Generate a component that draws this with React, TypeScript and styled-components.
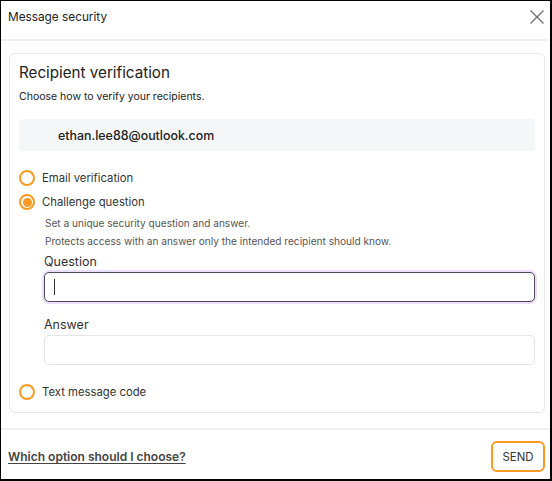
import styled, { createGlobalStyle } from "styled-components";
import { useState } from "react";

const Global = createGlobalStyle`
  html, body {
    margin: 0;
    padding: 0;
    background: #fff;
  }
  body {
    font-family: Inter, "Noto Sans", sans-serif;
    color: #222;
  }
  * {
    box-sizing: border-box;
  }
`;

const ORANGE = "#fa9a22";

const Dialog = styled.div`
  width: 552px;
  height: 481px;
  border: 1px solid #000;
  border-right-width: 2px;
  border-bottom-width: 2px;
  display: flex;
  flex-direction: column;
  background: #fff;
`;

const Header = styled.div`
  height: 40px;
  flex-shrink: 0;
  display: flex;
  align-items: center;
  justify-content: space-between;
  padding: 0 4px 6px 7px;
  border-bottom: 2px solid #eeeff1;
`;

const Title = styled.div`
  font-size: 11.8px;
  line-height: 16px;
  color: #222;
`;

const CloseButton = styled.button`
  width: 18px;
  height: 18px;
  border: none;
  background: none;
  padding: 0;
  display: flex;
  align-items: center;
  justify-content: center;
  cursor: pointer;
`;

const Body = styled.div`
  flex: 1;
  padding: 12px 5px 0 8px;
`;

const Card = styled.div`
  border: 1px solid #e6e7e9;
  border-radius: 6px;
  padding: 8px 9px 8px 9px;
`;

const Heading = styled.h2`
  margin: 0;
  font-size: 15.2px;
  font-weight: 400;
  color: #222;
  line-height: 22px;
`;

const Subtitle = styled.p`
  margin: 5px 0 0;
  font-size: 10.5px;
  line-height: 16px;
  color: #222;
`;

const RecipientBox = styled.div`
  margin-top: 14px;
  height: 32px;
  border-radius: 4px;
  background: #f5f6f7;
  display: flex;
  align-items: center;
  padding: 1px 0 0 39px;
  font-size: 12.4px;
  font-weight: 500;
  color: #222;
`;

const Options = styled.div`
  margin-top: 15px;
  display: flex;
  flex-direction: column;
`;

const OptionRow = styled.label<{ $spaced?: boolean }>`
  display: flex;
  align-items: center;
  gap: 7px;
  height: 24px;
  margin-top: ${(p) => (p.$spaced ? 15 : 0)}px;
  font-size: 11.3px;
  color: #333;
  cursor: pointer;
`;

const Radio = styled.span<{ $checked: boolean }>`
  width: 16px;
  height: 16px;
  flex-shrink: 0;
  border-radius: 50%;
  border: 2px solid ${ORANGE};
  display: flex;
  align-items: center;
  justify-content: center;
  &::after {
    content: "";
    width: 9px;
    height: 9px;
    border-radius: 50%;
    background: ${ORANGE};
    display: ${(p) => (p.$checked ? "block" : "none")};
  }
`;

const Details = styled.div`
  padding: 1px 0 0 25px;
`;

const Hint = styled.p`
  margin: 0;
  padding-left: 1px;
  font-size: 10.1px;
  line-height: 17.5px;
  color: #555;
`;

const FieldLabel = styled.div<{ $gap: number }>`
  margin-top: ${(p) => p.$gap}px;
  font-size: 12.5px;
  color: #333;
  line-height: 18px;
`;

const InputWrap = styled.div`
  position: relative;
  margin-top: 1px;
`;

const TextInput = styled.input<{ $focused?: boolean }>`
  display: block;
  width: 100%;
  height: 30px;
  border-radius: 5px;
  padding: 0 9px;
  font: inherit;
  font-size: 12.5px;
  outline: none;
  border: ${(p) => (p.$focused ? "1.5px solid #4d4855" : "1px solid #e3e4e6")};
  box-shadow: ${(p) => (p.$focused ? "0 0 0 2px #ebdffb" : "none")};
  caret-color: transparent;
`;

const Caret = styled.span`
  position: absolute;
  left: 10px;
  top: 7px;
  width: 1px;
  height: 16px;
  background: #333;
  pointer-events: none;
`;

const Footer = styled.div`
  height: 51px;
  flex-shrink: 0;
  border-top: 2px solid #eeeff1;
  display: flex;
  align-items: center;
  justify-content: space-between;
  padding: 4px 5px 0 7px;
`;

const HelpLink = styled.a`
  font-size: 12px;
  font-weight: 600;
  color: #444;
  text-decoration: underline;
  text-underline-offset: 2px;
  cursor: pointer;
`;

const SendButton = styled.button`
  width: 54px;
  height: 31px;
  padding: 0;
  border: 2px solid ${ORANGE};
  border-radius: 6px;
  background: #fff;
  font: inherit;
  font-size: 11.4px;
  color: #333;
  cursor: pointer;
`;

type Method = "email" | "challenge" | "sms";

const CloseIcon = () => (
  <svg width="14" height="14" viewBox="0 0 14 14" fill="none" stroke="#6f6f6f" strokeWidth="1.3">
    <path d="M0.5 0.5 L13.5 13.5 M13.5 0.5 L0.5 13.5" />
  </svg>
);

function App() {
  const [method, setMethod] = useState<Method>("challenge");

  return (
    <>
      <Global />
      <Dialog>
        <Header>
          <Title>Message security</Title>
          <CloseButton aria-label="Close">
            <CloseIcon />
          </CloseButton>
        </Header>
        <Body>
          <Card>
            <Heading>Recipient verification</Heading>
            <Subtitle>Choose how to verify your recipients.</Subtitle>
            <RecipientBox>ethan.lee88@outlook.com</RecipientBox>
            <Options>
              <OptionRow onClick={() => setMethod("email")}>
                <Radio $checked={method === "email"} />
                Email verification
              </OptionRow>
              <OptionRow onClick={() => setMethod("challenge")}>
                <Radio $checked={method === "challenge"} />
                Challenge question
              </OptionRow>
              {method === "challenge" && (
                <Details>
                  <Hint>Set a unique security question and answer.</Hint>
                  <Hint>Protects access with an answer only the intended recipient should know.</Hint>
                  <FieldLabel $gap={3}>Question</FieldLabel>
                  <InputWrap>
                    <TextInput $focused autoFocus />
                    <Caret />
                  </InputWrap>
                  <FieldLabel $gap={14}>Answer</FieldLabel>
                  <InputWrap>
                    <TextInput />
                  </InputWrap>
                </Details>
              )}
              <OptionRow $spaced={method === "challenge"} onClick={() => setMethod("sms")}>
                <Radio $checked={method === "sms"} />
                Text message code
              </OptionRow>
            </Options>
          </Card>
        </Body>
        <Footer>
          <HelpLink>Which option should I choose?</HelpLink>
          <SendButton>SEND</SendButton>
        </Footer>
      </Dialog>
    </>
  );
}

export default App;
